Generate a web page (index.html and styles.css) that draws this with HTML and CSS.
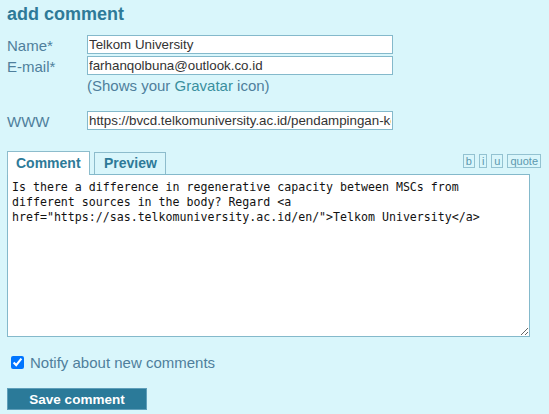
FILE: index.html
```html
<!DOCTYPE html>
<html>
<head>
<meta charset="utf-8">
<link rel="stylesheet" href="styles.css">
</head>
<body>
<div class="wrap">
  <h2 class="title">add comment</h2>
  <div class="fields">
    <label class="lbl">Name*</label>
    <input class="inp" type="text" value="Telkom University">
    <label class="lbl">E-mail*</label>
    <input class="inp" type="text" value="farhanqolbuna@outlook.co.id">
    <span></span>
    <div class="note">(Shows your <a class="grav" href="#">Gravatar</a> icon)</div>
    <label class="lbl www">WWW</label>
    <input class="inp www" type="text" value="https://bvcd.telkomuniversity.ac.id/pendampingan-kewirausahaan/">
  </div>
  <div class="tabrow">
    <div class="tabs">
      <span class="tab active">Comment</span>
      <span class="tab">Preview</span>
    </div>
    <div class="tools">
      <span class="tool">b</span>
      <span class="tool">i</span>
      <span class="tool">u</span>
      <span class="tool">quote</span>
    </div>
  </div>
  <textarea class="body">Is there a difference in regenerative capacity between MSCs from different sources in the body? Regard &lt;a href="https://sas.telkomuniversity.ac.id/en/"&gt;Telkom University&lt;/a&gt;</textarea>
  <label class="notify"><input type="checkbox" class="chk" checked>Notify about new comments</label>
  <button class="save">Save comment</button>
</div>
</body>
</html>
```
FILE: styles.css
```css
html, body {
  margin: 0;
  padding: 0;
  background: #d9f6fb;
}
body {
  font-family: "Liberation Sans", Arial, sans-serif;
}
.wrap {
  padding: 3px 8px 0 7px;
  display: flex;
  flex-direction: column;
  align-items: flex-start;
}
.title {
  margin: 0;
  font-size: 18px;
  line-height: 22px;
  font-weight: bold;
  color: #2e7a98;
}
.fields {
  margin-top: 10px;
  display: grid;
  grid-template-columns: 80px 306px;
  row-gap: 2px;
}
.lbl {
  font-size: 15px;
  line-height: 16px;
  padding-top: 3px;
  color: #4f7f9c;
}
.inp {
  box-sizing: border-box;
  height: 19px;
  width: 306px;
  margin: 0;
  padding: 0 1px;
  border: 1px solid #84b9cb;
  background: #fff;
  font-family: "Liberation Sans", Arial, sans-serif;
  font-size: 13.333px;
  color: #333;
  outline: none;
}
.note {
  font-size: 15px;
  line-height: 17px;
  color: #4f7f9c;
}
.grav {
  color: #3a8f9e;
  text-decoration: none;
}
.www {
  margin-top: 15px;
}
.tabrow {
  margin-top: 21px;
  width: 534px;
  display: flex;
  justify-content: space-between;
  align-items: flex-start;
  margin-bottom: -1px;
  position: relative;
  z-index: 1;
}
.tabs {
  display: flex;
  align-items: flex-start;
  gap: 4px;
}
.tab {
  display: block;
  box-sizing: border-box;
  font-size: 14px;
  line-height: 16px;
  font-weight: bold;
  color: #2e7a98;
  border: 1px solid #8dbccc;
  border-bottom: none;
  background: #d9f6fb;
}
.tab.active {
  background: #fff;
  margin-top: 0;
  height: 24px;
  padding: 3px 8px 5px 8px;
  width: 83px;
}
.tab:not(.active) {
  height: 22px;
  width: 72px;
  padding: 2px 0 0 9px;
  margin-top: 1px;
}
.tools {
  display: flex;
  gap: 4px;
  margin-top: 3px;
}
.tool {
  display: block;
  font-size: 11px;
  line-height: 12px;
  padding: 0 2px;
  border: 1px solid #93c2d1;
  color: #5c98ae;
}
.body {
  box-sizing: border-box;
  width: 523px;
  height: 163px;
  margin: 0;
  padding: 5px 4px;
  border: 1px solid #84b9cb;
  background: #fff;
  font-family: "DejaVu Sans Mono", monospace;
  font-size: 11.6px;
  line-height: 15px;
  color: #111;
  outline: none;
}
.notify {
  margin-top: 16px;
  height: 19px;
  display: flex;
  align-items: center;
  font-size: 15px;
  color: #4f7f9c;
}
.chk {
  width: 13px;
  height: 13px;
  margin: 0 6px 0 4px;
}
.save {
  margin-top: 16px;
  box-sizing: border-box;
  width: 140px;
  height: 22px;
  border: 1px solid #5f9fba;
  background: #2b7a99;
  color: #fff;
  font-family: "Liberation Sans", Arial, sans-serif;
  font-weight: bold;
  font-size: 13.5px;
  padding: 0;
}
```
